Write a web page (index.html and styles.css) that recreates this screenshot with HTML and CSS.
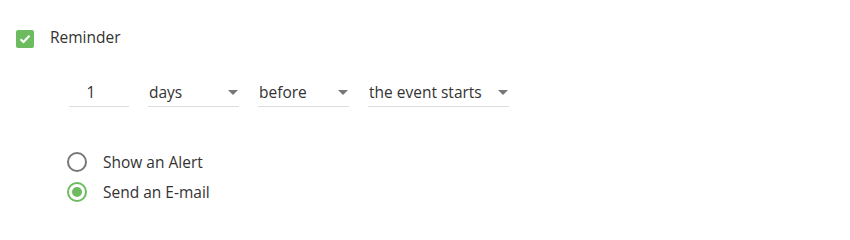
FILE: index.html
```html
<!DOCTYPE html>
<html>
<head>
<meta charset="utf-8">
<link rel="stylesheet" href="styles.css">
</head>
<body>
<div class="panel">
  <label class="check-row">
    <span class="checkbox">
      <svg width="12" height="10" viewBox="0 0 12 10"><path d="M1.5 5.2 L4.5 8 L10.5 1.8" fill="none" stroke="#fff" stroke-width="2.2"/></svg>
    </span>
    <span class="label">Reminder</span>
  </label>
  <div class="fields">
    <div class="field num">1</div>
    <div class="field sel w91"><span>days</span><span class="arrow"></span></div>
    <div class="field sel w91"><span>before</span><span class="arrow"></span></div>
    <div class="field sel w141"><span>the event starts</span><span class="arrow"></span></div>
  </div>
  <div class="radios">
    <label class="radio-row"><span class="radio"></span><span class="label">Show an Alert</span></label>
    <label class="radio-row"><span class="radio on"><span class="dot"></span></span><span class="label">Send an E-mail</span></label>
  </div>
</div>
</body>
</html>
```
FILE: styles.css
```css
html, body { margin: 0; padding: 0; background: #fff; }
body { font-family: "Open Sans", "Noto Sans", sans-serif; font-size: 15.5px; color: #333; }
.panel { padding: 30px 0 0 16px; }
.check-row { display: flex; align-items: center; height: 18px; }
.checkbox { width: 18px; height: 18px; background: #6cbb5f; border-radius: 2px; display: flex; align-items: center; justify-content: center; }
.check-row .label { margin-left: 16px; position: relative; top: -2px; }
.fields { display: flex; gap: 19px; margin: 30px 0 0 53px; }
.field { height: 29px; border-bottom: 1px solid #ddd; display: flex; align-items: center; box-sizing: border-box; }
.num { width: 60px; justify-content: center; padding-right: 16px; box-sizing: border-box; }
.sel { justify-content: space-between; padding-left: 1px; padding-right: 1px; }
.w91 { width: 91px; }
.w141 { width: 141px; }
.arrow { width: 0; height: 0; border-left: 5px solid transparent; border-right: 5px solid transparent; border-top: 5px solid #777; }
.radios { margin: 45px 0 0 51px; display: flex; flex-direction: column; gap: 10px; }
.radio-row { display: flex; align-items: center; height: 20px; }
.radio { width: 20px; height: 20px; border: 2px solid #777; border-radius: 50%; box-sizing: border-box; display: flex; align-items: center; justify-content: center; }
.radio.on { border-color: #6cbb5f; }
.dot { width: 10px; height: 10px; border-radius: 50%; background: #6cbb5f; }
.radio-row .label { margin-left: 16px; }
```
